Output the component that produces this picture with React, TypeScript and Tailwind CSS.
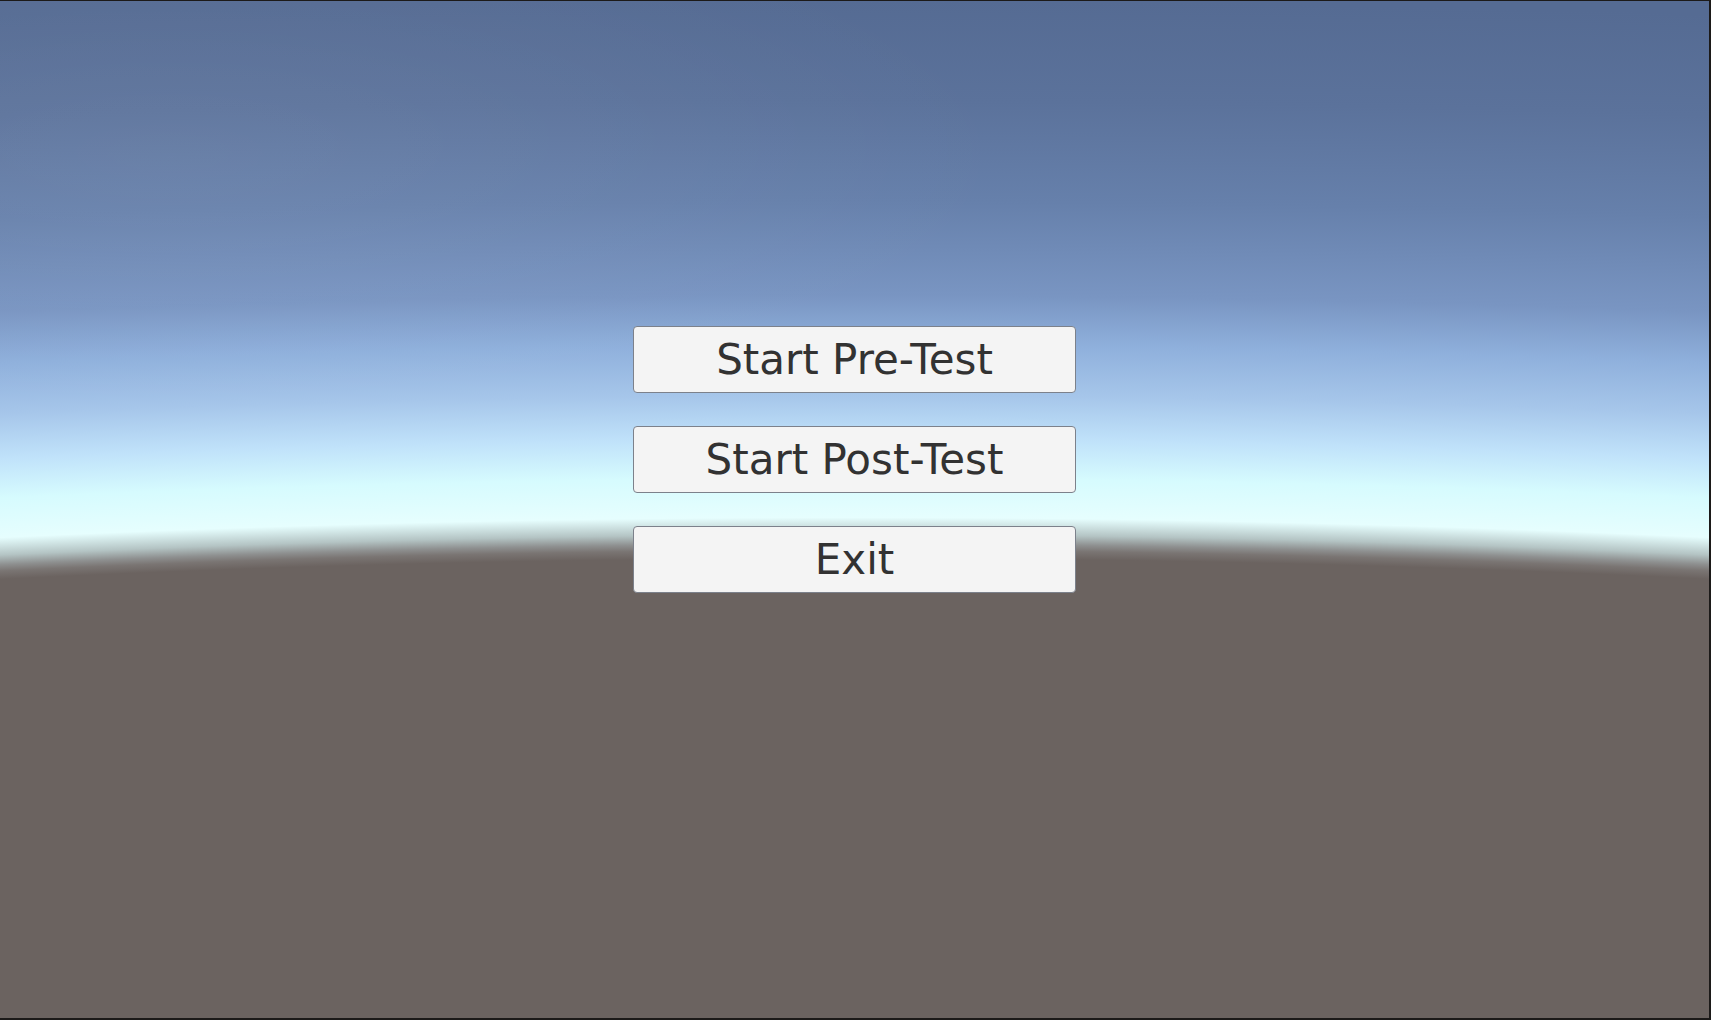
import React from 'react';

const BOTONES = ['Start Pre-Test', 'Start Post-Test', 'Exit'];

// stops measured down the screen centre, offset = (1557 - y) / 1557
const CIELO: [number, string][] = [
  [0, '#6b6360'],
  [0.6423, '#6b6360'],
  [0.6475, '#7a7573'],
  [0.6515, '#8e9090'],
  [0.6575, '#b4c4c4'],
  [0.6685, '#e6fefe'],
  [0.6935, '#d6fbfe'],
  [0.7183, '#c0e2fa'],
  [0.7466, '#a6c6ea'],
  [0.7788, '#8fb0dc'],
  [0.8109, '#7995c2'],
  [0.8714, '#6680ab'],
  [0.9357, '#5b729b'],
  [1, '#556b93'],
];

function Skybox() {
  return (
    <svg
      className="col-start-1 row-start-1 block h-full w-full"
      viewBox="0 0 1709 1017"
      preserveAspectRatio="none"
    >
      <defs>
        <radialGradient
          id="cielo"
          gradientUnits="userSpaceOnUse"
          cx="855"
          cy="1558"
          r="1558"
          gradientTransform="translate(855 1558) scale(4.2 1) translate(-855 -1558)"
        >
          {CIELO.map(([o, c]) => (
            <stop key={o} offset={o} stopColor={c} />
          ))}
        </radialGradient>
        <radialGradient id="brillo" cx="0.1" cy="0.3" r="0.5">
          <stop offset="0" stopColor="#ffffff" stopOpacity="0.06" />
          <stop offset="1" stopColor="#ffffff" stopOpacity="0" />
        </radialGradient>
      </defs>
      <rect x="0" y="0" width="1709" height="1017" fill="url(#cielo)" />
      <rect x="0" y="0" width="1709" height="520" fill="url(#brillo)" />
    </svg>
  );
}

function Boton({ texto }: { texto: string }) {
  return (
    <button
      type="button"
      className="flex h-[67px] w-[443px] items-center justify-center rounded-[4px] border border-[#7c818b] bg-[#f4f4f4] text-[42px] leading-none text-[#323232]"
    >
      {texto}
    </button>
  );
}

export default function App() {
  return (
    <div
      className="h-[1020px] w-full overflow-hidden border-t border-r-2 border-b-2 border-[#1c1a19] bg-[#6b6360]"
      style={{ fontFamily: '"DejaVu Sans", Verdana, sans-serif' }}
    >
      <div className="grid h-full w-full">
        <Skybox />
        <div className="col-start-1 row-start-1 flex flex-col items-center gap-[33px] pt-[325px]">
          {BOTONES.map((b) => (
            <Boton key={b} texto={b} />
          ))}
        </div>
      </div>
    </div>
  );
}
